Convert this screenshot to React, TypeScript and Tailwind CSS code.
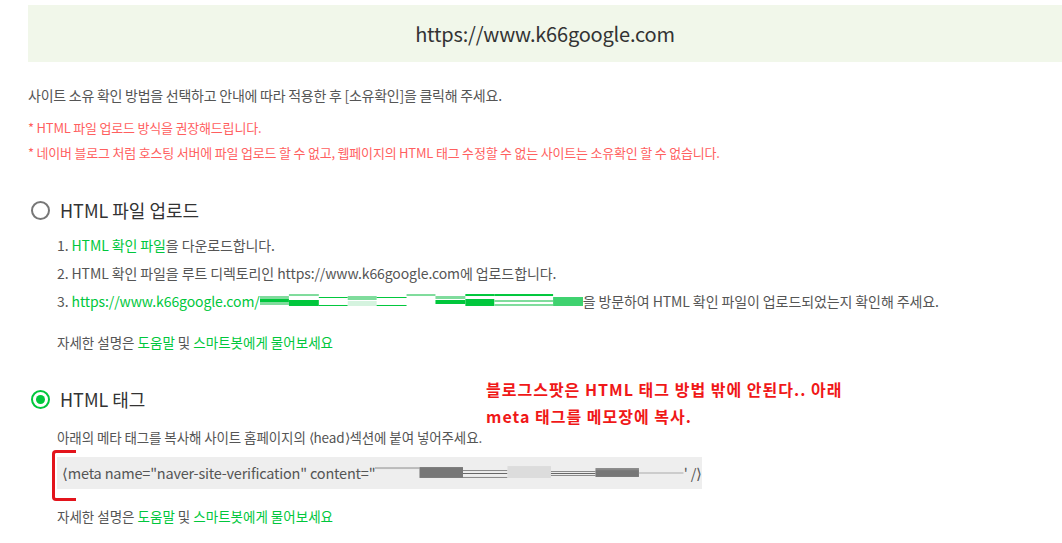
import React from "react";

const font = { fontFamily: '"Noto Sans CJK KR", "Noto Sans", sans-serif' };

function LinkRedact() {
  const g = "#00c73c";
  const l = "#7fdc9c";
  const vl = "#d5f3df";
  return (
    <svg width="323" height="14" viewBox="0 0 324 14" className="inline-block align-middle">
      <rect x="0" y="2" width="29" height="3" fill={l} />
      <rect x="0" y="5" width="29" height="3" fill={g} />
      <rect x="0" y="8" width="29" height="3" fill={l} />
      <rect x="29" y="0" width="30" height="2" fill={l} />
      <rect x="29" y="6" width="30" height="6" fill={g} />
      <rect x="59" y="3" width="29" height="1" fill={g} />
      <rect x="59" y="11" width="29" height="1" fill={g} />
      <rect x="88" y="2" width="29" height="4" fill={l} />
      <rect x="88" y="7" width="29" height="5" fill={vl} />
      <rect x="117" y="3" width="30" height="1" fill={g} />
      <rect x="117" y="11" width="30" height="1" fill={g} />
      <rect x="147" y="0" width="29" height="2" fill={l} />
      <rect x="176" y="2" width="30" height="3" fill={l} />
      <rect x="176" y="6" width="30" height="4" fill={g} />
      <rect x="206" y="0" width="29" height="2" fill={g} />
      <rect x="206" y="5" width="29" height="7" fill={g} />
      <rect x="235" y="0" width="59" height="2" fill={g} />
      <rect x="235" y="6" width="59" height="2" fill={l} />
      <rect x="235" y="10" width="59" height="2" fill={l} />
      <rect x="294" y="3" width="30" height="9" fill="#3fd26f" />
    </svg>
  );
}

function MetaRedact() {
  return (
    <svg width="312" height="14" viewBox="0 0 312 14" className="inline-block align-middle">
      <rect x="0" y="1" width="45" height="2" fill="#bbb" />
      <rect x="45" y="1" width="44" height="11" fill="#777" />
      <rect x="89" y="4" width="45" height="1" fill="#888" />
      <rect x="89" y="7" width="45" height="1" fill="#666" />
      <rect x="89" y="11" width="45" height="1" fill="#888" />
      <rect x="134" y="0" width="44" height="12" fill="#dcdcdc" />
      <rect x="178" y="5" width="45" height="1" fill="#888" />
      <rect x="178" y="7" width="45" height="1" fill="#666" />
      <rect x="178" y="9" width="45" height="1" fill="#888" />
      <rect x="223" y="2" width="44" height="2" fill="#888" />
      <rect x="223" y="4" width="44" height="7" fill="#777" />
      <rect x="267" y="6" width="45" height="2" fill="#ccc" />
    </svg>
  );
}

function Help() {
  return (
    <p className="text-[13.5px] leading-[20px] text-[#555]">
      자세한 설명은 <span className="text-[#00c73c]">도움말</span> 및{" "}
      <span className="text-[#00c73c]">스마트봇에게 물어보세요</span>
    </p>
  );
}

export default function App() {
  return (
    <div className="relative w-[1062px] h-[543px] overflow-hidden bg-white" style={font}>
      <div className="pt-[5px] pl-[28px]">
        <div className="h-[57px] bg-[#f1f7ea] flex items-center justify-center text-[20px] text-[#333] tracking-[-0.2px]">
          https://www.k66google.com
        </div>
      </div>
      <div className="pl-[28px]">
        <p className="mt-[23px] text-[14px] leading-[20px] text-[#555] tracking-[-0.25px]">
          사이트 소유 확인 방법을 선택하고 안내에 따라 적용한 후 [소유확인]을 클릭해 주세요.
        </p>
        <p className="mt-[13px] text-[13px] leading-[20px] text-[#ff5f5f] tracking-[-0.2px]">
          * HTML 파일 업로드 방식을 권장해드립니다.
        </p>
        <p className="mt-[5px] text-[13px] leading-[20px] text-[#ff5f5f] tracking-[-0.2px]">
          * 네이버 블로그 처럼 호스팅 서버에 파일 업로드 할 수 없고, 웹페이지의 HTML 태그 수정할 수 없는 사이트는 소유확인 할 수 없습니다.
        </p>

        <div className="mt-[35px] h-[24px] flex items-center ml-[3px]">
          <span className="w-[19px] h-[19px] rounded-full border-2 border-[#777] box-border" />
          <span className="ml-[10px] text-[18px] text-[#333]">HTML 파일 업로드</span>
        </div>
        <ol className="mt-[9px] ml-[29px] text-[14px] leading-[28px] text-[#555] tracking-[-0.1px]">
          <li>
            1. <span className="text-[#00c73c]">HTML 확인 파일</span>을 다운로드합니다.
          </li>
          <li>2. HTML 확인 파일을 루트 디렉토리인 https://www.k66google.com에 업로드합니다.</li>
          <li className="flex items-center whitespace-nowrap">
            <span>3.&nbsp;</span>
            <span className="text-[#00c73c]">https://www.k66google.com/</span>
            <LinkRedact />
            <span>을 방문하여 HTML 확인 파일이 업로드되었는지 확인해 주세요.</span>
          </li>
        </ol>
        <div className="mt-[17px] ml-[29px]">
          <Help />
        </div>

        <div className="mt-[35px] h-[24px] flex items-center ml-[3px]">
          <span className="w-[19px] h-[19px] rounded-full border-[2.5px] border-[#00c73c] box-border flex items-center justify-center">
            <span className="w-[9px] h-[9px] rounded-full bg-[#00c73c]" />
          </span>
          <span className="ml-[10px] text-[18px] text-[#333]">HTML 태그</span>
        </div>
        <p className="mt-[16px] ml-[29px] text-[13.5px] leading-[20px] text-[#555] tracking-[-0.1px]">
          아래의 메타 태그를 복사해 사이트 홈페이지의 ⟨head⟩섹션에 붙여 넣어주세요.
        </p>
        <div className="mt-[10px] ml-[29px] w-[645px] h-[32px] bg-[#eeeeee] flex items-center pl-[5px] text-[14.5px] text-[#555] tracking-[-0.2px] whitespace-nowrap">
          <span>⟨meta name="naver-site-verification" content="</span>
          <MetaRedact />
          <span>' /⟩</span>
        </div>
        <div className="mt-[17px] ml-[29px]">
          <Help />
        </div>
      </div>

      {/* annotations */}
      <div className="absolute left-[486px] top-[376px] text-[16px] leading-[27px] font-bold text-[#f01818] tracking-[1px]">
        <p>블로그스팟은 HTML 태그 방법 밖에 안된다.. 아래</p>
        <p>meta 태그를 메모장에 복사.</p>
      </div>
      <div className="absolute left-[52px] top-[450px] w-[24px] h-[51px] border-l-[3px] border-t-[3px] border-b-[3px] border-[#e3141c] rounded-l-[4px]" />
    </div>
  );
}
